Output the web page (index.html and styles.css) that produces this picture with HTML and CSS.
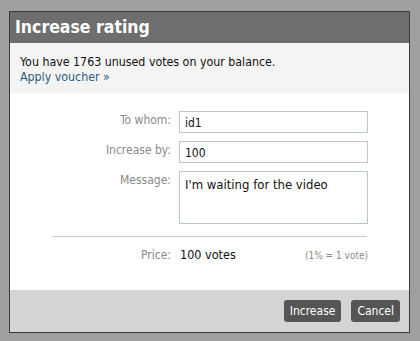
FILE: index.html
```html
<!DOCTYPE html>
<html>
<head>
<meta charset="utf-8">
<link rel="stylesheet" href="styles.css">
</head>
<body>
<div class="page">
  <div class="dialog">
    <div class="header">Increase rating</div>
    <div class="info">
      <div>You have 1763 unused votes on your balance.</div>
      <a class="link" href="#">Apply voucher »</a>
    </div>
    <div class="form">
      <div class="row">
        <div class="label">To whom:</div>
        <div class="input">id1</div>
      </div>
      <div class="row">
        <div class="label">Increase by:</div>
        <div class="input">100</div>
      </div>
      <div class="row">
        <div class="label">Message:</div>
        <div class="textarea">I'm waiting for the video</div>
      </div>
      <div class="sep"></div>
      <div class="price">
        <div class="label plabel">Price:</div>
        <div class="pval">100 votes</div>
        <div class="pnote">(1% = 1 vote)</div>
      </div>
    </div>
    <div class="footer">
      <button class="btn">Increase</button>
      <button class="btn">Cancel</button>
    </div>
  </div>
</div>
</body>
</html>
```
FILE: styles.css
```css
html, body {
  margin: 0;
  padding: 0;
}
body {
  background: #9f9f9f;
  width: 420px;
  height: 341px;
  overflow: hidden;
  font-family: "DejaVu Sans Condensed", "DejaVu Sans", sans-serif;
}
.page {
  padding: 11px 0 0 9px;
}
.dialog {
  width: 399px;
  border: 1px solid #3c3c3c;
  background: #fff;
}
.header {
  height: 31px;
  background: #6e6e6e;
  color: #fff;
  font-family: "DejaVu Sans Condensed", "DejaVu Sans", sans-serif;
  font-weight: bold;
  font-size: 17.5px;
  line-height: 31px;
  padding-left: 5px;
}
.info {
  height: 50px;
  box-sizing: border-box;
  background: #f4f4f4;
  padding: 12px 0 0 10px;
  font-size: 12.3px;
  line-height: 15px;
  color: #111;
}
.link {
  color: #2f5d7c;
  text-decoration: none;
}
.form {
  height: 197px;
  box-sizing: border-box;
  padding-top: 18px;
}
.row {
  display: flex;
  margin-bottom: 8px;
}
.label {
  width: 161px;
  text-align: right;
  color: #8a8a8a;
  font-size: 12px;
  line-height: 15px;
  padding-top: 2px;
  box-sizing: border-box;
}
.input, .textarea {
  margin-left: 8px;
  width: 189px;
  height: 22px;
  box-sizing: border-box;
  border: 1px solid #b9c7cb;
  font-size: 12px;
  color: #111;
  padding: 4px 0 0 5px;
  line-height: 14px;
}
.textarea {
  height: 53px;
  font-size: 13px;
  padding-top: 6px;
}
.sep {
  margin: 12px 0 0 42px;
  width: 315px;
  border-top: 1px solid #c8c8c8;
}
.price {
  display: flex;
  align-items: baseline;
  margin-top: 10px;
}
.plabel {
  padding-top: 0;
  font-size: 12px;
}
.pval {
  margin-left: 9px;
  font-size: 12.5px;
  color: #111;
}
.pnote {
  margin-left: auto;
  margin-right: 41px;
  font-size: 10px;
  color: #8a8a8a;
}
.footer {
  height: 42px;
  background: #d4d4d4;
  display: flex;
  justify-content: flex-end;
  align-items: flex-start;
  padding: 10px 9px 0 0;
  box-sizing: border-box;
  gap: 10px;
}
.btn {
  height: 22px;
  border: none;
  border-radius: 3px;
  background: #555;
  color: #fff;
  font-family: "DejaVu Sans Condensed", "DejaVu Sans", sans-serif;
  font-size: 12px;
  padding: 0 6px;
}
```
